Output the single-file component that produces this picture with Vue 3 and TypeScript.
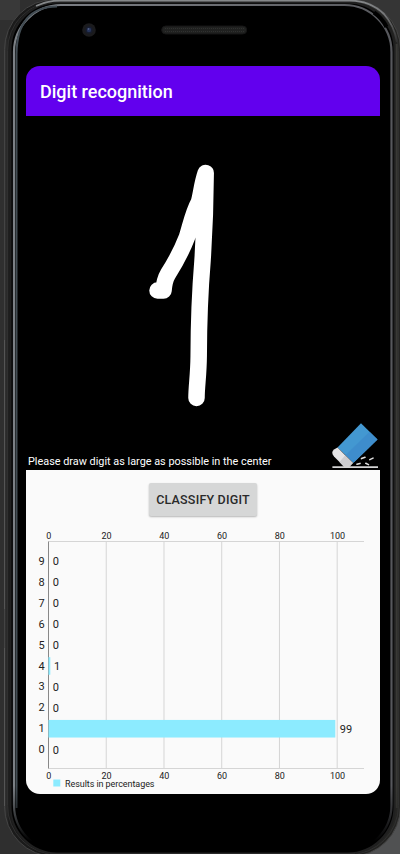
<script setup lang="ts">
interface Score {
  digit: number
  value: number
}

const scores: Score[] = [
  { digit: 9, value: 0 },
  { digit: 8, value: 0 },
  { digit: 7, value: 0 },
  { digit: 6, value: 0 },
  { digit: 5, value: 0 },
  { digit: 4, value: 1 },
  { digit: 3, value: 0 },
  { digit: 2, value: 0 },
  { digit: 1, value: 99 },
  { digit: 0, value: 0 },
]

const ticks: number[] = [0, 20, 40, 60, 80, 100]

const originX = 22.5
const unit = 2.887
const rowPitch = 20.93
const plotTop = 14.5
const plotBottom = 241.5

const tickX = (t: number): number => originX + t * unit
const rowY = (i: number): number => 34.3 + i * rowPitch
const barWidth = (v: number): number => (v === 1 ? 1.8 : v * unit + 1)
const labelX = (v: number): number => originX + 4.3 + (v === 1 ? 1.3 : v * unit * 1.004)
</script>

<template>
  <div class="stage">
    <svg class="frame" viewBox="0 0 400 854" aria-hidden="true">
      <defs>
        <linearGradient id="body" x1="0" x2="1" y1="0" y2="0">
          <stop offset="0" stop-color="#353535" />
          <stop offset=".012" stop-color="#1b1b1b" />
          <stop offset=".5" stop-color="#101010" />
          <stop offset="1" stop-color="#252523" />
        </linearGradient>
        <linearGradient id="rim" x1="0" x2="1" y1="0" y2="0">
          <stop offset="0" stop-color="#7b8085" />
          <stop offset=".15" stop-color="#797c82" />
          <stop offset=".6" stop-color="#696b70" />
          <stop offset="1" stop-color="#57585d" />
        </linearGradient>
        <linearGradient id="sheen" x1="360" x2="399" y1="0" y2="42" gradientUnits="userSpaceOnUse">
          <stop offset="0" stop-color="#85888a" />
          <stop offset=".5" stop-color="#77787a" />
          <stop offset="1" stop-color="#2c2c2c" />
        </linearGradient>
        <linearGradient id="rimFade" x1="0" x2="0" y1="0" y2="854" gradientUnits="userSpaceOnUse">
          <stop offset=".92" stop-color="#fff" />
          <stop offset=".985" stop-color="#000" />
        </linearGradient>
        <mask id="rimMask" maskUnits="userSpaceOnUse" x="0" y="0" width="400" height="854">
          <rect width="400" height="854" fill="url(#rimFade)" />
        </mask>
      </defs>
      <rect width="400" height="854" fill="#2f2f2f" />
      <rect width="20" height="20" fill="#393939" />
      <rect x="360" y="0" width="40" height="60" fill="#353535" />
      <rect x="365" y="800" width="35" height="54" fill="#505152" />
      <rect x="4.500" y="-.5" width="396" height="857" rx="50" fill="url(#body)" stroke="#444" />
      <rect x="7.500" y="1.500" width="391" height="853" rx="49" fill="none" stroke="#303030" />
      <rect x="10.500" y="2.500" width="384" height="851" rx="47" fill="#000" stroke="#202020" stroke-width="2" />
      <path d="M36 6Q48 .5 60 .5H350Q371 1 384 14Q394 25 397 42" fill="none" stroke="url(#sheen)" stroke-width="1.800" />
      <g mask="url(#rimMask)">
        <rect x="14" y="5" width="377.500" height="847" rx="47" fill="none" stroke="url(#rim)" stroke-width="2.200" />
        <path d="M16.500 808V54Q17 7 57 6.500" fill="none" stroke="#424c53" stroke-width="2" />
        <path d="M396.700 44V808" fill="none" stroke="#393936" stroke-width="2" />
      </g>
      <path d="M374 12.500Q382 18 386.500 27" fill="none" stroke="#000" stroke-width="4" />
      <path d="M50 853.500H355" stroke="#292929" />
      <path d="M4.500 340V609M4.500 648V806" stroke="#555" />
      <circle cx="89" cy="30" r="6.800" fill="#1b1b1d" />
      <circle cx="89" cy="30" r="3.700" fill="#171c2c" />
      <circle cx="89" cy="30" r="2.200" fill="#26345a" />
      <circle cx="88.500" cy="29" r=".8" fill="#626f95" />
      <rect x="161.700" y="26" width="85" height="8" rx="4" fill="#202120" stroke="#151515" />
      <path d="M165 28.500H244M165 31.500H244" stroke="#303130" stroke-dasharray="1 1" />
    </svg>

    <main class="screen">
      <header class="bar">Digit recognition</header>

      <section class="canvas">
        <svg class="stroke" viewBox="0 0 354 354" aria-hidden="true">
          <path
            d="M131.500 174.500H137.500C138 168 139 163 142 158C149 147 156 134 161 121C165 108 167 97 173 86C175.500 76 176 68 179.700 57C179.500 85 178.500 115 176.500 145C174 175 172.800 200 172.700 240C172.500 260 170.500 270 170.500 282"
            fill="none" stroke="#fff" stroke-width="16.500" stroke-linecap="round" stroke-linejoin="round"
          />
        </svg>
        <p class="hint">Please draw digit as large as possible in the center</p>
        <svg class="eraser" viewBox="0 0 48 48" aria-label="Erase">
          <path d="M6.500 26.500L30 2.300L46.500 18.500L22.500 41.800Z" fill="#4398d1" />
          <path d="M14.700 34L38.500 10.800L46.500 18.500L22.500 41.800Z" fill="#3e8dcc" />
          <path d="M6.500 26.500L22 42Q19 45.500 15 46Q13 45.500 11 43.500L3 35.500Q-.5 31.500 3 28.500Z" fill="#e4e4e6" />
          <path d="M14 34.500L22 42L18.500 46H13L8.500 41Z" fill="#cdcdd0" />
          <path d="M1.400 46.100H47" stroke="#d4d4d5" stroke-width="1.600" />
          <path
            d="M30.500 37.600L34 36.300M38.800 38.600L42 37.100M26 43.300L29 42.400M34.800 42.300L37.500 43.600"
            stroke="#dededf" stroke-width="1.600" stroke-linecap="round"
          />
        </svg>
      </section>

      <section class="results">
        <button class="classify" type="button">CLASSIFY DIGIT</button>
        <svg class="chart" viewBox="0 0 354 267">
          <path
            v-for="t in ticks.slice(1)" :key="'g' + t"
            :d="`M${tickX(t)} ${plotTop}V${plotBottom}`" class="grid"
          />
          <path :d="`M${originX} ${plotTop}H338M${originX} ${plotBottom}H338`" class="grid" />
          <path :d="`M${originX} ${plotTop}V${plotBottom}`" class="axis" />
          <g v-for="(s, i) in scores" :key="s.digit">
            <rect
              v-if="s.value > 0" :x="originX" :y="rowY(i) - 8.800"
              :width="barWidth(s.value)" height="17.600" fill="#8cebff"
            />
            <text class="num" x="18.600" :y="rowY(i) + 3.600" text-anchor="end">{{ s.digit }}</text>
            <text class="num" :x="labelX(s.value)" :y="rowY(i) + 4">{{ s.value }}</text>
          </g>
          <g v-for="t in ticks" :key="'t' + t">
            <text class="tick" :x="tickX(t) + 0.400" y="12.300" text-anchor="middle">{{ t }}</text>
            <text class="tick" :x="tickX(t) + 0.400" y="252" text-anchor="middle">{{ t }}</text>
          </g>
          <rect x="27.300" y="252.500" width="7" height="7" fill="#8cebff" />
          <text class="legend" x="39" y="259.500" textLength="89.500">Results in percentages</text>
        </svg>
      </section>
    </main>
  </div>
</template>

<style>
body {
  margin: 0;
  background: #2f2f2f;
}
</style>

<style scoped>
.stage {
  position: relative;
  box-sizing: border-box;
  width: 400px;
  height: 854px;
  padding: 66px 20px 60px 26px;
  overflow: hidden;
  font-family: Roboto, "Liberation Sans", sans-serif;
}

.frame {
  position: absolute;
  inset: 0;
  width: 400px;
  height: 854px;
}

.screen {
  position: relative;
  display: flex;
  flex-direction: column;
  height: 728px;
  overflow: hidden;
  border-radius: 14px;
  background: #000;
}

.bar {
  flex: 0 0 50px;
  min-height: 0;
  padding-left: 14px;
  background: #6200ee;
  color: #fff;
  font-size: 18px;
  font-weight: 500;
  line-height: 52px;
}

.canvas {
  position: relative;
  display: flex;
  flex: 0 0 354px;
  align-items: flex-end;
  justify-content: space-between;
  box-sizing: border-box;
  padding: 0 1px 0 2px;
  background: #000;
}

.stroke {
  position: absolute;
  inset: 0;
  width: 354px;
  height: 354px;
}

.hint {
  position: relative;
  margin: 0 0 1px;
  color: #fff;
  font-size: 10.870px;
  line-height: 15px;
  white-space: nowrap;
}

.eraser {
  position: relative;
  width: 48px;
  height: 48px;
  margin-bottom: 1px;
}

.results {
  display: flex;
  flex: 1;
  flex-direction: column;
  align-items: center;
  background: #fafafa;
}

.classify {
  flex: 0 0 33px;
  width: 108px;
  height: 33px;
  margin: 13px 0 11px;
  padding: 0;
  border: 0;
  border-radius: 2px;
  background: #d6d7d7;
  box-shadow: 0 1px 2px rgba(0, 0, 0, 0.28);
  color: #2a2a2a;
  font: 500 12.500px/33px Roboto, "Liberation Sans", sans-serif;
  letter-spacing: 0.200px;
  white-space: nowrap;
}

.chart {
  flex: none;
  width: 354px;
  height: 267px;
}

.grid {
  fill: none;
  stroke: #d5d5d5;
  stroke-width: 1;
}

.axis {
  stroke: #888;
  stroke-width: 1;
}

.num {
  fill: #222;
  font-size: 11px;
}

.tick,
.legend {
  fill: #222;
  font-size: 9px;
}
</style>
